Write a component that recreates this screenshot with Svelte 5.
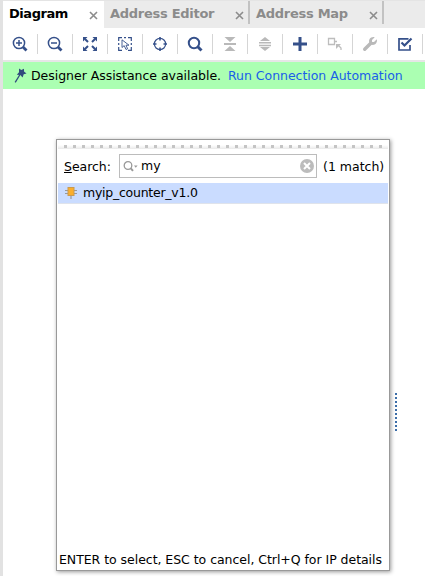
<script>
  const tabs = [
    { label: 'Diagram', width: 101, active: true },
    { label: 'Address Editor', width: 146 },
    { label: 'Address Map', width: 134 }
  ];
  const tools = ['zoomin', 'zoomout', 'fit', 'select', 'target', 'search', 'collapse', 'expand', 'add', 'external', 'wrench', 'check'];
  const grips = Array.from({ length: 36 }, (_, i) => i);
  const dots = Array.from({ length: 10 }, (_, i) => i);
</script>

<div class="window">
  <div class="tabs">
    {#each tabs as tab}
      <div class="tab" class:active={tab.active} style="width:{tab.width}px">
        <span>{tab.label}</span>
        <svg class="close" width="9" height="9" viewBox="0 0 9 9"><path d="M1 1L8 8M8 1L1 8" /></svg>
      </div>
    {/each}
  </div>

  <div class="toolbar">
    {#each tools as tool}
      <div class="tool">
        <svg width="16" height="16" viewBox="0 0 16 16" fill="none" stroke="#35508a" stroke-width="2">
          {#if tool === 'zoomin' || tool === 'zoomout'}
            <circle cx="7" cy="7" r="5.6" stroke-width="1.5" />
            <path d="M11 11L14.5 14.5" stroke-width="2.8" />
            <path d="M4 7H10" stroke-width="1.5" />
            {#if tool === 'zoomin'}<path d="M7 4V10" stroke-width="1.5" />{/if}
          {:else if tool === 'fit'}
            <path d="M3 3L6 6M13 3L10 6M3 13L6 10M13 13L10 10" />
            <path d="M1 1H5.5L1 5.5ZM15 1H10.5L15 5.5ZM1 15H5.5L1 10.5ZM15 15H10.5L15 10.5Z" fill="#35508a" stroke="none" />
          {:else if tool === 'select'}
            <path d="M1.7 5V1.7H5M11 1.7H14.3V5M1.7 11V14.3H5M11 14.3H14.3V11M7 1.7H9M1.7 7V9M14.3 7V9" stroke-width="1.2" />
            <path d="M5 3.8V11.5L7.2 9.6L9 13.5L10.6 12.8L9 9.2H12Z" stroke-width=".9" />
          {:else if tool === 'target'}
            <circle cx="8" cy="8" r="5.6" stroke-width="1.2" />
            <path d="M8 1V4.5M8 11.5V15M1 8H4.5M11.5 8H15" stroke-width="1.6" />
          {:else if tool === 'search'}
            <circle cx="7" cy="7" r="5.2" />
            <path d="M10.8 10.8L14.5 14.5" stroke-width="3" />
          {:else if tool === 'collapse'}
            <path d="M2.5 1H13.5L8 6ZM2.5 15H13.5L8 10Z" fill="#b9b9b9" stroke="none" />
            <path d="M2 8H14" stroke="#b9b9b9" />
          {:else if tool === 'expand'}
            <path d="M3 5L8 1L13 5ZM3 11L8 15L13 11Z" fill="#b9b9b9" stroke="none" />
            <path d="M2 6.7H14M2 9.5H14" stroke="#b9b9b9" stroke-width="1.5" />
          {:else if tool === 'add'}
            <path d="M8 1V15M1 8H15" stroke-width="3" />
          {:else if tool === 'external'}
            <path d="M1.5 2.5H7.5V8.5H1.5ZM7.5 5.5H10M14 14V12L11 9" stroke="#bdbdbd" stroke-width="1.3" />
            <path d="M9 8H14L9 13Z" fill="#bdbdbd" stroke="none" />
          {:else if tool === 'wrench'}
            <path d="M2.7 13.3L9 7" stroke="#b9b9b9" stroke-width="3.4" stroke-linecap="round" />
            <path d="M12.7 1.2L10 4V6H12L14.8 3.3C15.8 7 12.5 10 9 8.5L7.5 7C6 3.5 9 .2 12.7 1.2Z" fill="#b9b9b9" stroke="none" />
          {:else}
            <path d="M11.5 2.8H2V14H13V9" stroke-width="1.7" />
            <path d="M4.5 6.5L7.5 9.5L14.5 2.5" stroke-width="2.2" />
          {/if}
        </svg>
      </div>
    {/each}
  </div>

  <div class="assist">
    <svg width="13" height="16" viewBox="0 0 13 16">
      <path d="M5 0.5L7.3 2L10 .8L10 3.4L12.5 5.5L9.7 6.3L8.6 9.5L6.3 7L2.8 6.8L5 4.2Z" fill="#314b7e" />
      <path d="M6.3 6L1.2 14.3" stroke="#314b7e" stroke-width="1.3" />
    </svg>
    <span class="notice">Designer Assistance available.</span>
    <span class="link">Run Connection Automation</span>
  </div>

  <div class="popup">
    <div class="grip">{#each grips as g}<i></i>{/each}</div>
    <div class="searchrow">
      <label for="query"><u>S</u>earch:</label>
      <div class="field" id="query">
        <svg width="16" height="13" viewBox="0 0 16 13" fill="none" stroke="#999">
          <circle cx="5" cy="5.5" r="3.8" stroke-width="1.3" />
          <path d="M7.8 8.3L10 10.8" stroke-width="2" />
          <path d="M11 5.5H14.6L12.8 7.7Z" fill="#999" stroke="none" />
        </svg>
        <span>my</span>
        <svg class="clear" width="14" height="14" viewBox="0 0 14 14">
          <circle cx="7" cy="7" r="7" fill="#bcbcbc" />
          <path d="M4 4L10 10M10 4L4 10" stroke="#fff" stroke-width="2" />
        </svg>
      </div>
      <span class="count">(1 match)</span>
    </div>
    <div class="result">
      <svg width="12" height="14" viewBox="0 0 12 14">
        <path d="M0 4.5H12M0 7.5H12M6 8V13" stroke="#999" stroke-width="1.2" />
        <rect x="3" y="1.5" width="6" height="8" fill="#fbae2c" stroke="#c99a50" />
      </svg>
      <span>myip_counter_v1.0</span>
    </div>
    <div class="hint">ENTER to select, ESC to cancel, Ctrl+Q for IP details</div>
  </div>
  <div class="splitter">{#each dots as d}<i></i>{/each}</div>
</div>

<style>
  .window {
    position: relative;
    box-sizing: border-box;
    width: 425px;
    height: 576px;
    overflow: hidden;
    border-left: 3px solid #e2e2e2;
    background: #fff;
    color: #000;
    font: 12.5px/16px "DejaVu Sans", sans-serif;
    white-space: nowrap;
  }
  svg { display: block; flex: none; }
  .tabs { display: flex; height: 28px; background: #ebebeb; border-top: 1px solid #e4e4e4; box-sizing: border-box; }
  .tab {
    position: relative;
    display: flex;
    align-items: center;
    justify-content: space-between;
    box-sizing: border-box;
    padding: 0 6px 2px;
    color: #8b8b8b;
    font-weight: bold;
    font-size: 13px;
  }
  .tab span { letter-spacing: -.28px; }
  .tab:not(.active)::after { content: ""; position: absolute; right: 0; top: 0; width: 2px; height: 23px; background: #c2c2c2; }
  .active { background: #fff; color: #000; }
  .active span { letter-spacing: -.45px; }
  .close { margin-top: 4px; fill: none; stroke: #8c8c8c; stroke-width: 1.6; }
  .toolbar { display: flex; height: 32px; border-bottom: 2px solid #e6e6e6; }
  .tool { position: relative; flex: none; display: flex; align-items: center; box-sizing: border-box; width: 35px; padding-left: 9px; }
  .tool::after { content: ""; position: absolute; right: 0; top: 6px; width: 1px; height: 20px; background: #d5d5d5; }
  .assist { display: flex; align-items: center; height: 27px; padding-left: 11px; background: #abffb2; }
  .notice { width: 197px; margin-left: 4px; letter-spacing: -.03px; }
  .link { color: #1a5ee8; letter-spacing: -.03px; }
  .popup {
    position: absolute;
    left: 53px;
    top: 139px;
    display: flex;
    flex-direction: column;
    box-sizing: border-box;
    width: 334px;
    height: 432px;
    border: 1px solid #999;
    background: #fff;
    box-shadow: 1px 1px 4px #999;
  }
  .grip { display: flex; gap: 6px; height: 9px; box-sizing: border-box; margin: 0 1px; padding: 5px 6px 0; background: linear-gradient(#fff 5px, #e9e9e9); }
  .grip i { flex: none; width: 3px; height: 3px; background: #c4c4c4; }
  .searchrow { display: flex; align-items: center; height: 34px; padding-left: 7px; }
  label { width: 55px; padding-top: 1px; letter-spacing: -.05px; }
  .field { display: flex; align-items: center; box-sizing: border-box; width: 198px; height: 24px; padding: 0 2px 0 3px; border: 1px solid #bcbcbc; }
  .field span { margin-left: 2px; }
  .clear { margin-left: auto; }
  .count { margin-left: 6px; padding-top: 1px; }
  .result { display: flex; align-items: center; height: 21px; box-sizing: border-box; margin: 0 1px; padding-left: 7px; background: #cadcff; border-bottom: 1px solid #dfe3eb; }
  .result span { margin-left: 6px; letter-spacing: -.25px; }
  .hint { margin: auto 0 2px 2px; letter-spacing: -.04px; }
  .splitter { position: absolute; left: 392px; top: 393px; display: flex; flex-direction: column; gap: 2px; }
  .splitter i { width: 2px; height: 2px; background: #3b6da8; }
</style>
